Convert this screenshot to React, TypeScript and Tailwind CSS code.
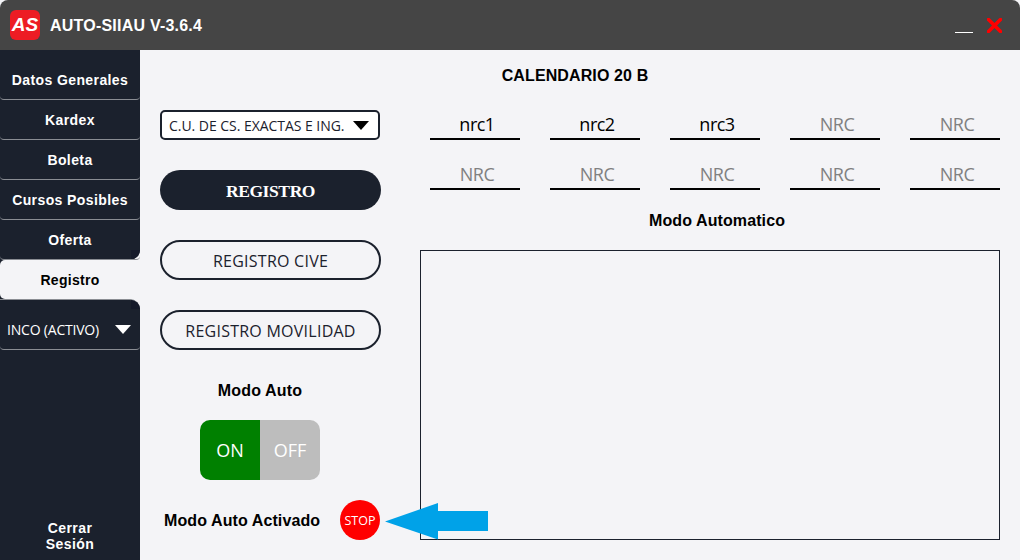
const sans = "font-['Liberation_Sans',Arial,sans-serif]";
const ui = "font-['Open_Sans','Noto_Sans',sans-serif]";

const navTop = ["Datos Generales", "Kardex", "Boleta", "Cursos Posibles", "Oferta"];
const nrcRows = [
  [
    { label: "nrc1", filled: true },
    { label: "nrc2", filled: true },
    { label: "nrc3", filled: true },
    { label: "NRC", filled: false },
    { label: "NRC", filled: false },
  ],
  [
    { label: "NRC", filled: false },
    { label: "NRC", filled: false },
    { label: "NRC", filled: false },
    { label: "NRC", filled: false },
    { label: "NRC", filled: false },
  ],
];

const Triangle = ({ className }: { className: string }) => (
  <svg width="16" height="9" viewBox="0 0 16 9" className={className}>
    <path d="M0 0H16L8 9Z" fill="currentColor" />
  </svg>
);

const NavItem = ({ label }: { label: string }) => (
  <div
    className={`flex h-10 items-center justify-center rounded-b-[4px] border-b border-[#8a8d93] pt-0.5 text-[14px] font-bold tracking-[0.4px] text-white last:rounded-br-[10px] ${sans}`}
  >
    {label}
  </div>
);

const OutlineButton = ({ label }: { label: string }) => (
  <div
    className={`flex h-10 w-[221px] items-center justify-center rounded-[20px] border-2 border-[#1b212d] pt-0.5 text-[16px] tracking-[0.25px] text-[#1b212d] ${ui}`}
  >
    {label}
  </div>
);

const Sidebar = () => (
  <aside className="flex w-[140px] flex-col bg-[#f4f4f7]">
    <div className="relative flex flex-col rounded-br-[10px] bg-[#1b212d] pt-[10px]">
      {navTop.map((item) => (
        <NavItem key={item} label={item} />
      ))}
      <div className="absolute bottom-px right-0 size-[9px] rounded-br-[9px] bg-[#151a2a]" />
    </div>
    <div className="h-[39px] bg-[linear-gradient(to_right,#1b212d_50%,#f4f4f7_50%)]">
      <div
        className={`flex h-full items-center justify-center rounded-l-[5px] bg-[#f4f4f7] pt-0.5 text-[14px] font-bold tracking-[0.3px] text-black ${sans}`}
      >
        Registro
      </div>
    </div>
    <div className="relative flex flex-1 flex-col rounded-tr-[10px] border-t border-[#8a8d93] bg-[#1b212d]">
      <div className="absolute right-0 top-0 size-[9px] rounded-tr-[9px] bg-[#151a2a]" />
      <div className="mt-[10px] flex h-10 items-center justify-between rounded-b-[4px] border-b border-[#8a8d93] pl-[7px] pr-[9px] text-white">
        <span className={`text-[14px] tracking-[-0.2px] ${ui}`}>INCO (ACTIVO)</span>
        <Triangle className="text-white" />
      </div>
      <div className={`mt-auto pb-2 text-center text-[14px] font-bold leading-4 tracking-[0.45px] text-white ${sans}`}>
        Cerrar
        <br />
        Sesión
      </div>
    </div>
  </aside>
);

const ControlsColumn = () => (
  <div className="flex w-[280px] flex-col pl-5">
    <div className="flex h-[30px] w-[220px] items-center justify-between rounded-[5px] border-2 border-[#1b212d] bg-white pl-[7px] pr-[9px]">
      <span className={`whitespace-nowrap text-[14px] tracking-[-0.04px] text-[#1b212d] ${ui}`}>C.U. DE CS. EXACTAS E ING.</span>
      <Triangle className="shrink-0 text-black" />
    </div>
    <div className="mt-[30px] flex h-10 w-[221px] items-center justify-center rounded-[20px] bg-[#1b212d] pt-[3px] font-['Liberation_Serif',serif] text-[17.5px] font-bold tracking-[-0.4px] text-white">
      REGISTRO
    </div>
    <div className="mt-[30px]">
      <OutlineButton label="REGISTRO CIVE" />
    </div>
    <div className="mt-[30px]">
      <OutlineButton label="REGISTRO MOVILIDAD" />
    </div>
    <div className={`mt-[31px] w-[200px] text-center text-[16px] font-bold leading-5 tracking-[0.15px] text-black ${sans}`}>
      Modo Auto
    </div>
    <div className={`ml-10 mt-[19px] flex h-[60px] w-[120px] overflow-hidden rounded-[10px] text-[18px] text-white ${ui}`}>
      <div className="flex w-[60px] items-center justify-center bg-[#008000]">ON</div>
      <div className="flex w-[60px] items-center justify-center bg-[#bdbdbd]">OFF</div>
    </div>
    <div className="mt-5 flex h-10 items-center">
      <span className={`ml-1 w-[176px] pt-0.5 text-[16px] font-bold tracking-[0.1px] text-black ${sans}`}>Modo Auto Activado</span>
      <div className={`flex size-10 items-center justify-center rounded-full bg-[#ff0000] pt-0.5 text-[12.5px] text-white ${ui}`}>
        STOP
      </div>
    </div>
  </div>
);

const NrcField = ({ label, filled }: { label: string; filled: boolean }) => (
  <div
    className={`flex h-[30px] w-[90px] items-center justify-center border-b-2 border-black pl-[4px] text-[18px] tracking-[-0.5px] ${ui} ${
      filled ? "text-black" : "text-[#808080]"
    }`}
  >
    {label}
  </div>
);

const NrcColumn = () => (
  <div className="flex w-[580px] flex-col">
    <div className="flex flex-col gap-5 pl-[10px]">
      {nrcRows.map((row, i) => (
        <div key={i} className="flex gap-[30px]">
          {row.map((field, j) => (
            <NrcField key={j} label={field.label} filled={field.filled} />
          ))}
        </div>
      ))}
    </div>
    <div className={`mt-[21px] pl-[14px] text-center text-[16px] font-bold leading-5 tracking-[0.1px] text-black ${sans}`}>
      Modo Automatico
    </div>
    <div className="mt-[19px] h-[290px] w-[580px] border border-[#1b212d]" />
  </div>
);

export default function App() {
  return (
    <div className="relative flex h-[560px] w-[1020px] flex-col overflow-hidden bg-[#f4f4f7]">
      <header className="flex h-[50px] items-center rounded-t-[8px] bg-[#454545] pl-[10px] pr-[18px]">
        <div className={`flex size-[30px] items-center justify-center rounded-[6px] bg-[#ed1c24] text-[19px] font-bold italic text-white ${sans}`}>
          AS
        </div>
        <span className={`ml-[10px] pt-0.5 text-[16px] font-bold tracking-[0.22px] text-white ${sans}`}>AUTO-SIIAU V-3.6.4</span>
        <div className="ml-auto flex items-center gap-[14px]">
          <div className="mt-[14px] h-px w-[18px] bg-white" />
          <svg width="15" height="15" viewBox="0 0 15 15" className="text-[#ff0000]">
            <path d="M1.5 1.5L13.5 13.5M13.5 1.5L1.5 13.5" stroke="currentColor" strokeWidth="3.6" strokeLinecap="round" />
          </svg>
        </div>
      </header>
      <div className="flex flex-1">
        <Sidebar />
        <main className="flex flex-1 flex-col">
          <div className={`pt-4 pr-[10px] text-center text-[16px] font-bold leading-[20px] tracking-[0.12px] text-black ${sans}`}>
            CALENDARIO 20 B
          </div>
          <div className="mt-[24px] flex">
            <ControlsColumn />
            <NrcColumn />
          </div>
        </main>
      </div>
      <svg width="104" height="37" viewBox="0 0 104 37" className="absolute left-[385px] top-[503px] text-[#00a2e8]">
        <path d="M0 18.5L53 0V8H103V28H53V36.5Z" fill="currentColor" />
      </svg>
    </div>
  );
}
